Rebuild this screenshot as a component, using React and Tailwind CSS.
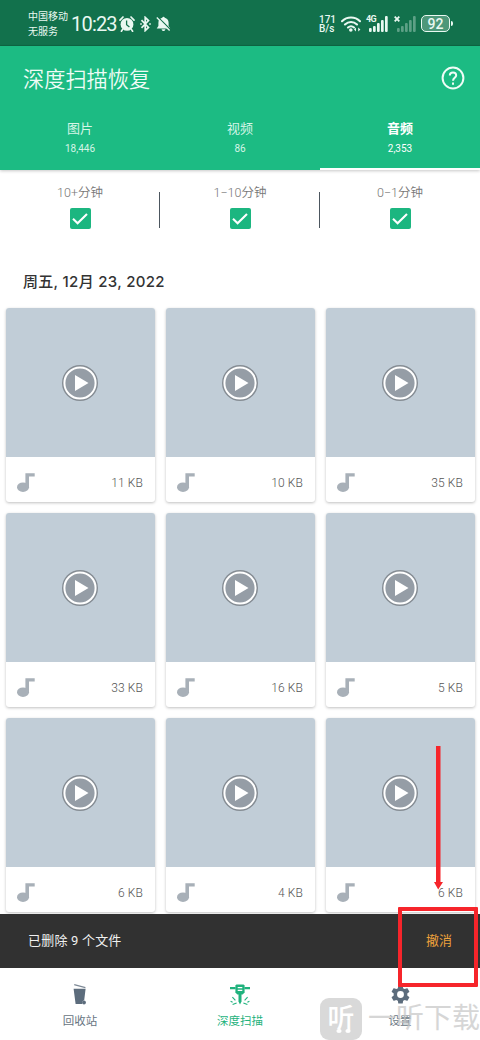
import { useState } from 'react'

const TABS = [
  { id: 'images', label: '图片', count: '18,446' },
  { id: 'video', label: '视频', count: '86' },
  { id: 'audio', label: '音频', count: '2,353' },
]

const FILTERS = ['10+分钟', '1−10分钟', '0−1分钟']

const FILES = ['11 KB', '10 KB', '35 KB', '33 KB', '16 KB', '5 KB', '6 KB', '4 KB', '6 KB']

const SIGNAL_BARS = [
  { x: 0, h: 4 },
  { x: 4, h: 6 },
  { x: 8, h: 9 },
  { x: 12, h: 12 },
  { x: 16, h: 16 },
]

function AlarmIcon() {
  return (
    <svg viewBox="0 0 16 16" className="w-4 h-4">
      <circle cx="8" cy="8.4" r="6.4" fill="#e9f8f1" />
      <path d="M1 4.2 4 1M15 4.2 12 1M3.6 13.4 2.4 15.2M12.4 13.4l1.2 1.8" stroke="#e9f8f1" strokeWidth="1.7" strokeLinecap="round" />
      <path d="M7.6 4.6v4.2l2.8 2.2" fill="none" stroke="#12714c" strokeWidth="1.3" />
    </svg>
  )
}

function BluetoothIcon() {
  return (
    <svg viewBox="0 0 11 16" className="w-[11px] h-4" fill="none" stroke="#e9f8f1" strokeWidth="1.7">
      <path d="M1.5 4.2 8.5 11.4 5.2 14.6V1.4L8.5 4.6 1.5 11.8" />
      <path d="M.2 8h1.6M9.2 8h1.6" />
    </svg>
  )
}

function BellOffIcon() {
  return (
    <svg viewBox="0 0 15 16" className="w-[15px] h-4">
      <path d="M7.5.8c.7 0 1.1.4 1.2 1 2.5.6 3.9 2.4 3.9 4.9v3.4l1.7 2.3H.7l1.7-2.3V6.7c0-2.5 1.4-4.3 3.900-4.900.1-.6.5-1 1.200-1zM5.600 13.300h3.800c-.2 1.200-.9 1.800-1.900 1.800s-1.700-.6-1.900-1.800z" fill="#e9f8f1" />
      <path d="M2 1.200 15 14.200" stroke="#12714c" strokeWidth="1.300" />
      <path d="M.8 1.600 13.600 14.600" stroke="#e9f8f1" strokeWidth="1.400" />
    </svg>
  )
}

function WifiIcon() {
  return (
    <svg viewBox="0 0 20 16" className="w-5 h-4" fill="none" stroke="#e9f8f1" strokeWidth="2.1" strokeLinecap="round">
      <path d="M1 5.2C6 .2 14 .2 19 5.2M4 8.5c3.5-3.4 8.5-3.4 12 0M7 11.5c1.9-1.6 4.1-1.6 6 0" />
      <circle cx="9.8" cy="14" r="1.8" fill="#e9f8f1" stroke="none" />
      <path d="m13 13.6 2-2v4zM19.4 13.6l-2.2-2v4z" fill="#e9f8f1" stroke="none" />
    </svg>
  )
}

function SignalIcon({ dim }) {
  return (
    <svg viewBox="0 0 19 16" className={`w-[19px] h-4 ${dim ? 'opacity-35' : ''}`}>
      {SIGNAL_BARS.map(b => (
        <rect key={b.x} x={b.x} y={16 - b.h} width="2.7" height={b.h} rx="1" fill="#e9f8f1" />
      ))}
    </svg>
  )
}

function StatusBar() {
  return (
    <div className="h-[46px] bg-[#12714c] border-b border-[#0f6744] text-[#e9f8f1] flex items-center justify-between pl-7 pr-[27px] pt-[2px]">
      <div className="flex items-center">
        <div className="w-[43px] text-[10px] leading-[15px] whitespace-nowrap">
          <div>中国移动</div>
          <div>无服务</div>
        </div>
        <span className="w-[48px] text-[20px] leading-6 tracking-[-0.8px]">10:23</span>
        <div className="flex items-center gap-[5px]">
          <AlarmIcon />
          <BluetoothIcon />
          <BellOffIcon />
        </div>
      </div>
      <div className="flex items-center">
        <div className="w-[22px] text-[10px] leading-[9px] font-medium">
          <div>171</div>
          <div>B/s</div>
        </div>
        <WifiIcon />
        <div className="relative ml-2">
          <SignalIcon />
          <span className="absolute -left-[3px] -top-[1px] text-[9px] leading-[9px] font-bold tracking-[-0.6px] bg-[#12714c]">4G</span>
        </div>
        <div className="relative ml-[9px] mr-[5px]">
          <SignalIcon dim />
          <svg viewBox="0 0 6 6" className="absolute -left-[3px] top-0 w-1.5 h-1.5">
            <path d="m.7.7 4.6 4.6M5.3.7.7 5.3" stroke="#e9f8f1" strokeWidth="1.8" />
          </svg>
        </div>
        <div className="w-[29px] h-[17px] rounded-[5px] border-[1.5px] border-[#e9f8f1] bg-[#4d9779] flex items-center justify-center text-[14px] leading-none font-medium">92</div>
        <div className="w-[2px] h-[5px] ml-px bg-[#e9f8f1] rounded-r" />
      </div>
    </div>
  )
}

function HelpIcon() {
  return (
    <svg viewBox="0 0 24 24" className="w-6 h-6" fill="none" stroke="#effcf6" strokeWidth="2">
      <circle cx="12" cy="12" r="10.4" />
      <path d="M8.8 9.6c0-1.9 1.3-3.2 3.2-3.2s3.2 1.2 3.2 2.9c0 2.5-3.2 2.6-3.2 5.5" />
      <path d="M12 16.6v2.1" />
    </svg>
  )
}

function Header({ active, onSelect }) {
  return (
    <header className="h-[124px] bg-[#1cbb83] flex flex-col shadow-[0_1px_3px_rgba(0,0,0,0.22)]">
      <div className="h-[64px] flex items-center justify-between pl-[23px] pr-[15px]">
        <h1 className="mt-[3px] text-[21.2px] leading-7 font-[350] text-[#effcf6]">深度扫描恢复</h1>
        <button><HelpIcon /></button>
      </div>
      <div className="grid grid-cols-3 flex-1">
        {TABS.map(t => (
          <button
            key={t.id}
            onClick={() => onSelect(t.id)}
            className={`flex flex-col items-center pt-[9px] border-b-2 ${active === t.id ? 'border-white text-white font-bold' : 'border-transparent text-[#d5f5e7]'}`}
          >
            <span className="text-[13px] leading-[19px]">{t.label}</span>
            <span className="text-[10px] leading-[14px] mt-[4px] font-normal">{t.count}</span>
          </button>
        ))}
      </div>
    </header>
  )
}

function Filters() {
  return (
    <div className="grid grid-cols-3 h-[85px]">
      {FILTERS.map((label, i) => (
        <div key={label} className="relative flex flex-col items-center pt-[13px]">
          <span className="text-[12.5px] leading-[19px] font-[350] text-[#777]">{label}</span>
          <span className="w-[21px] h-[21px] mt-[6px] rounded-[2px] bg-[#1cb680] flex items-center justify-center">
            <svg viewBox="0 0 16 12" className="w-4 h-3" fill="none" stroke="#fff" strokeWidth="2.1">
              <path d="m1 5.8 4.6 4.4L15 1" />
            </svg>
          </span>
          {i < 2 && <span className="absolute right-0 top-[22px] w-px h-9 bg-[#4c565f]" />}
        </div>
      ))}
    </div>
  )
}

function FileCard({ size }) {
  return (
    <div className="h-[194px] rounded-[3px] overflow-hidden bg-white shadow-[0_1px_3px_rgba(0,0,0,0.25)]">
      <div className="h-[149px] bg-[#c1cdd7] flex items-center justify-center">
        <svg viewBox="0 0 36 36" className="w-9 h-9">
          <circle cx="18" cy="18" r="18" fill="#858c93" />
          <circle cx="18" cy="18" r="15.6" fill="#959da6" stroke="#fff" strokeWidth="2" />
          <path d="M13 10v16l13.5-8z" fill="#fff" />
        </svg>
      </div>
      <div className="h-[45px] flex items-center justify-between pl-[11.5px] pr-[11.5px] pt-[6px]">
        <svg viewBox="0 0 18 19" className="w-[18px] h-[19px]" fill="#a8b0b8">
          <ellipse cx="6" cy="14.2" rx="6" ry="4.8" />
          <path d="M8.4.2h9.3v3.3H12v10.7H8.4z" />
        </svg>
        <span className="text-[12px] leading-4 font-light text-[#555] tracking-[0.1px]">{size}</span>
      </div>
    </div>
  )
}

function TrashIcon() {
  return (
    <svg viewBox="0 0 14 21" className="w-[14px] h-[21px]">
      <path d="m1.2.7 11.2 3" stroke="#7d8996" strokeWidth="1.2" />
      <path d="M.6 4.8h12l-1.4 11.4c-1.8.5-2.2 1.7-2 3.8H2.6z" fill="#5c6c7c" />
      <circle cx="11" cy="18.5" r="1.9" fill="#5c6c7c" />
    </svg>
  )
}

function DrillIcon() {
  return (
    <svg viewBox="0 0 20 21" className="w-5 h-[21px]" fill="#1fb27d">
      <path d="M0 3h5.6v2.2H0zM14.4 3H20v2.2h-5.6z" />
      <path d="M6.4.4h7.2l1 1v7l-2 2H7.400l-2-2v-7z" />
      <path d="M7.700 3.600h4.600M7.700 6.400h4.600" stroke="#fff" strokeWidth="1.100" />
      <path d="M8.500 10h3v7.500L10 20.600l-1.500-3.100z" />
      <path d="m2.400 13.200 3 3.200M17.600 13.200l-3 3.200M.6 17.200l2 1M19.400 17.200l-2 1M2.600 20.400l4-1.400M17.400 20.400l-4-1.400" stroke="#1fb27d" strokeWidth="1.100" />
    </svg>
  )
}

function GearIcon() {
  return (
    <svg viewBox="2 2 20 20" className="w-[19px] h-[19px]" fill="#5c6c7c">
      <path d="M19.140 12.940c.040-.300.060-.610.060-.940s-.020-.640-.070-.940l2.030-1.580a.490.490 0 0 0 .120-.610l-1.920-3.320a.488.488 0 0 0-.590-.220l-2.390.960c-.500-.380-1.030-.700-1.620-.940l-.360-2.540a.484.484 0 0 0-.480-.410h-3.840c-.240 0-.430.170-.470.410l-.360 2.540c-.590.240-1.130.570-1.620.940l-2.390-.960c-.220-.080-.470 0-.590.220L2.740 8.870c-.120.210-.080.470.120.610l2.030 1.580c-.050.300-.090.630-.090.940s.020.640.070.940l-2.030 1.580a.490.490 0 0 0-.120.610l1.920 3.320c.120.220.370.290.590.220l2.390-.960c.500.380 1.030.700 1.620.940l.360 2.540c.050.240.240.410.480.410h3.840c.240 0 .440-.170.470-.410l.360-2.540c.590-.240 1.130-.560 1.620-.940l2.390.960c.220.080.470 0 .590-.220l1.920-3.320c.120-.220.070-.470-.120-.610zM12 15.600A3.600 3.600 0 1 1 12 8.400a3.600 3.600 0 0 1 0 7.200z" />
    </svg>
  )
}

const NAV = [
  { label: '回收站', icon: TrashIcon, color: 'text-[#687582]' },
  { label: '深度扫描', icon: DrillIcon, color: 'text-[#1fb27d]' },
  { label: '设置', icon: GearIcon, color: 'text-[#687582]' },
]

function BottomNav() {
  return (
    <nav className="h-[72px] shrink-0 bg-white grid grid-cols-3">
      {NAV.map(n => (
        <button key={n.label} className={`flex flex-col items-center pt-4 ${n.color}`}>
          <span className="h-[21px] flex items-center"><n.icon /></span>
          <span className="text-[11.5px] leading-4 mt-2">{n.label}</span>
        </button>
      ))}
    </nav>
  )
}

function Watermark() {
  return (
    <div className="absolute left-[320px] bottom-0 w-[160px] h-[42px] flex items-center opacity-70 pointer-events-none">
      <div className="relative w-[42px] h-[42px] shrink-0 rounded-[9px] bg-[#c9c9c9] flex items-center justify-center text-white text-[27px] leading-none font-medium">
        听
        {/* note heads at the feet of the character */}
        <svg viewBox="0 0 42 42" className="absolute inset-0 w-[42px] h-[42px]" fill="#fff">
          <ellipse cx="19" cy="33" rx="2.6" ry="2" />
          <ellipse cx="28" cy="33" rx="2.6" ry="2" />
        </svg>
      </div>
      <span className="ml-[6px] text-[28px] leading-[42px] whitespace-nowrap text-[#c6c6c6]">一听下载</span>
    </div>
  )
}

export default function App() {
  const [tab, setTab] = useState('audio')

  return (
    <div className="relative w-[480px] h-[1040px] overflow-hidden bg-white flex flex-col font-['Roboto','Noto_Sans_CJK_SC',sans-serif]">
      <StatusBar />
      <Header active={tab} onSelect={setTab} />
      <main className="flex-1 min-h-0 overflow-hidden">
        <Filters />
        <h2 className="h-[53px] pl-[23px] pt-[15px] text-[15px] leading-6 font-medium tracking-[0.3px] text-[#333] font-['Inter','Noto_Sans_CJK_SC',sans-serif]">周五, 12月 23, 2022</h2>
        <div className="grid grid-cols-3 gap-[11px] px-[5.5px]">
          {FILES.map((size, i) => <FileCard key={i} size={size} />)}
        </div>
      </main>

      {/* Undo snackbar */}
      <div className="h-[54px] shrink-0 z-10 bg-[#313131] flex items-center justify-between pl-7 pr-7 text-[13px]">
        <span className="text-[#f0f0f0] tracking-[0.2px]">已删除 9 个文件</span>
        <button className="text-[#eda13c]">撤消</button>
      </div>
      <BottomNav />
      <Watermark />

      {/* Pointer and frame round the undo button */}
      <svg viewBox="0 0 14 144" className="absolute z-20 left-[431px] top-[746px] w-[14px] h-[144px]" fill="#f6252b">
        <path d="M5 0h4.5v136h2.500L7.200 143.500 3 136h2z" />
      </svg>
      <div className="absolute z-20 left-[398px] top-[907px] w-20 h-[80px] border-4 border-[#f6252b] rounded-[1px]" />
    </div>
  )
}
